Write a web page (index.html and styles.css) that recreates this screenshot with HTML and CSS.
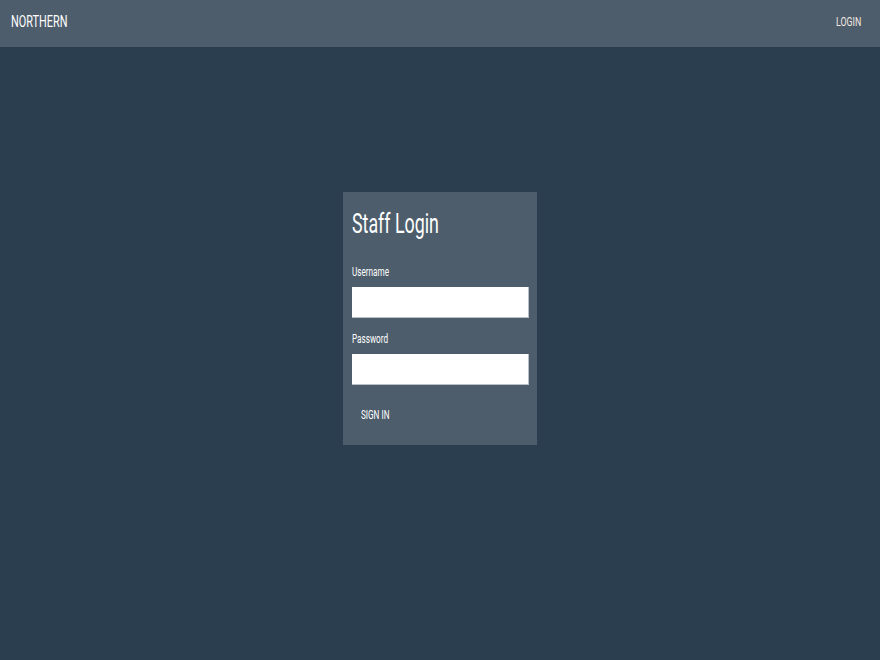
FILE: index.html
```html
<!DOCTYPE html>
<html lang="en">
<head>
<meta charset="utf-8">
<title>Northern - Staff Login</title>
<link rel="stylesheet" href="styles.css">
</head>
<body>
<header class="navbar">
  <a class="brand" href="#"><span class="sq">NORTHERN</span></a>
  <a class="nav-link" href="#"><span class="sq sq-r">LOGIN</span></a>
</header>
<main class="main">
  <form class="card">
    <h1 class="title"><span class="sq sq-title">Staff Login</span></h1>
    <label class="label" for="u"><span class="sq">Username</span></label>
    <input class="input" id="u" type="text">
    <label class="label" for="p"><span class="sq">Password</span></label>
    <input class="input" id="p" type="password">
    <button class="btn" type="button"><span class="sq">SIGN IN</span></button>
  </form>
</main>
</body>
</html>
```

FILE: styles.css
```css
html, body {
  margin: 0;
  padding: 0;
  height: 100%;
}
body {
  background: #2b3e50;
  font-family: Roboto, "Liberation Sans", sans-serif;
  color: #ffffff;
}
.sq {
  display: inline-block;
  transform: scaleX(0.68);
  transform-origin: left center;
  white-space: nowrap;
}
.sq-r {
  transform-origin: right center;
}
.sq-title {
  transform: scaleX(0.66);
}
.navbar {
  box-sizing: border-box;
  height: 47px;
  background: #4e5d6c;
  display: flex;
  align-items: center;
  justify-content: space-between;
  padding: 0 19px 4px 11px;
}
.brand {
  color: #ffffff;
  text-decoration: none;
  font-size: 16px;
}
.nav-link {
  color: #f2e8e0;
  text-decoration: none;
  font-size: 13px;
}
.main {
  display: flex;
  justify-content: center;
  padding-top: 145px;
}
.card {
  width: 177px;
  background: #4e5d6c;
  padding: 12px 8px 14px 9px;
  display: flex;
  flex-direction: column;
}
.title {
  margin: 0 0 20px;
  font-weight: 400;
  font-size: 27px;
  line-height: 40px;
}
.label {
  font-size: 12px;
  line-height: 16px;
  margin-bottom: 7px;
}
.input {
  box-sizing: border-box;
  width: 100%;
  height: 31px;
  margin: 0 0 13px;
  border: 0;
  background: #ffffff;
  box-shadow: inset -1px -1px 0 #b9c0c8;
  font-family: inherit;
}
.btn {
  align-self: flex-start;
  background: transparent;
  border: 0;
  color: #ffffff;
  font-family: inherit;
  font-size: 12px;
  padding: 10px 9px 9px;
  cursor: pointer;
}
```
